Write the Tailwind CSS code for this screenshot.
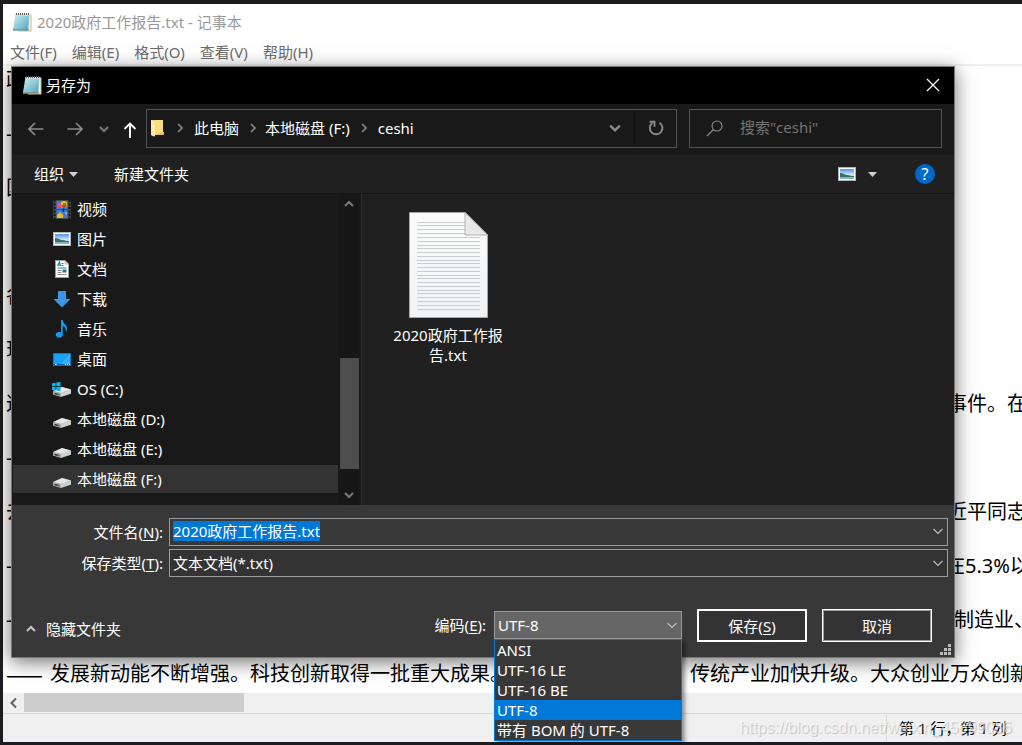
<!DOCTYPE html>
<html lang="zh-CN">
<head>
<meta charset="utf-8">
<meta name="viewport" content="width=device-width, initial-scale=1">
<title>2020政府工作报告.txt - 记事本</title>
<script src="https://cdn.jsdelivr.net/npm/@tailwindcss/browser@4"></script>
</head>
<body class="bg-[#1d1c1e] font-['Noto_Sans','Noto_Sans_CJK_SC',sans-serif] text-[15px] leading-5">

<svg class="absolute size-0" aria-hidden="true">
  <defs>
    <linearGradient id="padFill" x1="0" y1="0" x2="1" y2="1">
      <stop offset="0" stop-color="#d3eef3"/><stop offset=".5" stop-color="#8fcbd9"/><stop offset="1" stop-color="#4f9fb4"/>
    </linearGradient>
    <linearGradient id="sky" x1="0" y1="0" x2="0" y2="1">
      <stop offset="0" stop-color="#4f93e8"/><stop offset=".6" stop-color="#d8ecf8"/><stop offset="1" stop-color="#9cc8e4"/>
    </linearGradient>
    <linearGradient id="page" x1="0" y1="0" x2="0" y2="1">
      <stop offset="0" stop-color="#fbfbfb"/><stop offset="1" stop-color="#f1f3f5"/>
    </linearGradient>
    <symbol id="notepad" viewBox="0 0 20 20">
      <path d="M4 2.500h15.500v17H6z" fill="#c9b98a"/>
      <path d="M4 2.500h14.500v16H6z" fill="#eef1ee"/>
      <path d="M3.500 2h14l-1.300 16.500H.8z" fill="url(#padFill)"/>
      <path d="M3.500 2h14l-.2 2H3.200z" fill="#bcdfe6"/>
      <path d="M.8 18.500h15.400l1-1.200H1z" fill="#7b8d8a"/>
      <path d="M4.500 1v2M6.500 1v2M8.500 1v2M10.500 1v2M12.500 1v2M14.500 1v2M16.500 1v2" stroke="#565b5e" stroke-width="1"/>
    </symbol>
    <symbol id="picture" viewBox="0 0 18 14">
      <rect width="18" height="14" fill="#b4b4b4"/><rect x="1" y="1" width="16" height="12" fill="#fff"/>
      <rect x="2" y="2" width="14" height="10" fill="url(#sky)"/>
      <path d="M2 6c3 0 4 1.500 7 2s5 1 7 1v1H2z" fill="#3f6f61"/>
      <path d="M2 10h14v2H2z" fill="#7fb2cf"/>
    </symbol>
    <symbol id="drive" viewBox="0 0 18 12">
      <path d="M0 6.500L9 2l9 2.500v4.200L8 12 0 9.500z" fill="#8d8f91"/>
      <path d="M0 6L9 2l9 2.500L8 8z" fill="#e6e7e8"/>
      <path d="M0 6.200L8 8v3.700L0 9.500z" fill="#aeb0b1"/>
      <path d="M1.500 7.700l5 1.200v1.600l-5-1.200z" fill="#2d3330"/>
      <path d="M4.500 8.800l1.500.4v.8l-1.500-.4z" fill="#4fbf5b"/>
      <path d="M8 8l10-3.500v4L8 11.700z" fill="#cfd1d2"/>
    </symbol>
    <symbol id="chevDown" viewBox="0 0 10 10"><path d="M1 3l4 4 4-4" fill="none" stroke="currentColor" stroke-width="2"/></symbol>
    <symbol id="chevThin" viewBox="0 0 10 10"><path d="M.5 3L5 7.500 9.500 3" fill="none" stroke="currentColor" stroke-width="1.100"/></symbol>
    <symbol id="chevUp" viewBox="0 0 10 10"><path d="M1 7l4-4 4 4" fill="none" stroke="currentColor" stroke-width="2"/></symbol>
    <symbol id="chevRight" viewBox="0 0 8 10"><path d="M2 1l4 4-4 4" fill="none" stroke="currentColor" stroke-width="1.700"/></symbol>
    <symbol id="caret" viewBox="0 0 9 5"><path d="M0 0h9L4.500 5z" fill="currentColor"/></symbol>
  </defs>
</svg>

<div class="relative flex h-screen flex-col overflow-hidden pt-1 pb-[3px] pl-[3px]">

  <!-- Notepad window -->
  <main class="flex min-h-0 flex-1 flex-col bg-white">
    <header class="flex h-9 items-center gap-1 pl-[9px] text-[#999999]">
      <svg class="size-5"><use href="#notepad"/></svg>
      <h1 class="pl-px">2020政府工作报告.txt - 记事本</h1>
    </header>
    <nav class="flex h-[26px] items-center gap-[15px] border-b-2 border-[#f0f0f0] pl-[7px] text-[#6d6d6d]">
      <button>文件(F)</button><button>编辑(E)</button><button>格式(O)</button><button>查看(V)</button><button>帮助(H)</button>
    </nav>
    <article class="flex min-h-0 flex-1 flex-col gap-[27px] overflow-hidden pl-[3px] text-xl leading-[27px] whitespace-nowrap text-black">
      <p>政府工作报告</p>
      <p>——2020年5月22日</p>
      <p>国务院总理</p>
      <p>&nbsp;</p>
      <p>各位代表：</p>
      <p>现在，我代表国务院</p>
      <p class="flex"><span class="w-[941px] shrink-0">这次新冠肺炎疫情</span><span>事件。在</span></p>
      <p>——</p>
      <p class="flex"><span class="w-[941px] shrink-0">去年</span><span>近平同志</span></p>
      <p class="flex"><span class="w-[939px] shrink-0">——经济运行</span><span>在5.3%以下</span></p>
      <p class="flex"><span class="w-[948px] shrink-0">——经济结构</span><span>制造业、</span></p>
      <p class="flex"><span class="w-11 shrink-0 font-['Noto_Sans_CJK_SC',sans-serif] text-[22px]">——</span><span>发展新动能不断增强。科技创新取得一批重大成果。新兴产业蓬勃发展，传统产业加快升级。大众创业万众创新</span></p>
    </article>
    <div class="flex h-5 items-stretch bg-[#f0f0f0]">
      <button aria-label="向左滚动" class="flex w-[21px] items-center justify-center text-[#606060]">
        <svg class="h-3 w-2" viewBox="0 0 8 12"><path d="M6 1.500L1.500 6 6 10.500" fill="none" stroke="currentColor" stroke-width="2"/></svg>
      </button>
      <div class="mb-px w-[220px] bg-[#cdcdcd]"></div>
    </div>
    <footer class="relative flex h-[29px] items-center justify-end border-t border-[#d7d7d7] bg-[#f0f0f0] text-black">
      <div class="flex h-6.5 w-[136px] items-center border-l border-[#d7d7d7] pl-3 whitespace-nowrap">第 1 行，第 1 列</div>
      <div class="absolute top-1 right-2.5 font-['Liberation_Sans',sans-serif] text-base leading-5 text-white/60 [text-shadow:1px_1px_1px_rgb(0_0_0/0.2)]">https://blog.csdn.net/weixin_45699086</div>
    </footer>
  </main>

  <!-- Save-as dialog -->
  <section role="dialog" aria-labelledby="dlgTitle" class="absolute top-[66px] right-[67px] left-[11px] flex flex-col border border-[#777777] bg-[#383838] text-white shadow-[0_4px_18px_rgb(0_0_0/0.55)]">
    <header class="flex h-[37px] items-center bg-black pr-3.5 pb-0.5 pl-2.5">
      <svg class="size-5"><use href="#notepad"/></svg>
      <h2 id="dlgTitle" class="flex-1 pl-1">另存为</h2>
      <button aria-label="关闭"><svg class="size-3.5" viewBox="0 0 14 14"><path d="M1 1l12 12M13 1L1 13" stroke="#fff" stroke-width="1.300"/></svg></button>
    </header>

    <div class="flex h-[51px] items-center bg-[#191919] pr-3 pb-0.5 pl-4">
      <button aria-label="后退" class="text-[#8a8a8a]"><svg class="h-3.5 w-4" viewBox="0 0 16 14"><path d="M15.500 7H1M7 1L1 7l6 6" fill="none" stroke="currentColor" stroke-width="1.700"/></svg></button>
      <button aria-label="前进" class="ml-[23px] text-[#8a8a8a]"><svg class="h-3.5 w-4" viewBox="0 0 16 14"><path d="M.5 7H15M9 1l6 6-6 6" fill="none" stroke="currentColor" stroke-width="1.700"/></svg></button>
      <button aria-label="最近位置" class="ml-4 text-[#7a7a7a]"><svg class="size-2.5"><use href="#chevDown"/></svg></button>
      <button aria-label="上移" class="ml-3.5 pt-0.5 text-white"><svg class="h-4 w-3.5" viewBox="0 0 14 16"><path d="M7 16V1.500M1.500 7L7 1.500 12.500 7" fill="none" stroke="currentColor" stroke-width="1.900"/></svg></button>
      <div class="ml-[9px] flex h-[39px] flex-1 items-center border border-[#535353] pb-px pl-1">
        <svg class="h-[18px] w-[13px]" viewBox="0 0 13 18"><path d="M0 1h12v12l1 .5V16H4l-1 1.500L0 16z" fill="#f3cf6b"/><path d="M5 1h7v12l1 .5V16H3V2z" fill="#fbdc82"/><path d="M0 1l4 2v14.500L0 16z" fill="#ffe9a6"/><path d="M12 10v3.500l1 .5v2H4l8-3z" fill="#e9bb50"/></svg>
        <svg class="ml-3 h-2.5 w-2 text-[#8a8a8a]"><use href="#chevRight"/></svg>
        <a href="#" class="ml-2.5">此电脑</a>
        <svg class="ml-2.5 h-2.5 w-2 text-[#8a8a8a]"><use href="#chevRight"/></svg>
        <a href="#" class="ml-2">本地磁盘 (F:)</a>
        <svg class="ml-2.5 h-2.5 w-2 text-[#8a8a8a]"><use href="#chevRight"/></svg>
        <a href="#" class="ml-2.5 flex-1">ceshi</a>
        <button aria-label="历史记录" class="flex h-full w-10 items-center justify-center border-r border-[#121212] text-[#8a8a8a]"><svg class="size-3"><use href="#chevDown"/></svg></button>
        <button aria-label="刷新" class="flex h-full w-[41px] items-center justify-center"><svg class="size-4" viewBox="0 0 16 16"><path d="M11.500 2.700A6.300 6.300 0 1 1 4.300 3" fill="none" stroke="#8a8a8a" stroke-width="1.900"/><path d="M1.500 1.800h5v5" fill="none" stroke="#8a8a8a" stroke-width="1.900"/></svg></button>
      </div>
      <label class="ml-3 flex h-[39px] w-[253px] items-center gap-[17px] border border-[#535353] pb-px pl-4">
        <svg class="size-[17px] shrink-0" viewBox="0 0 17 17"><circle cx="11" cy="6" r="5" fill="none" stroke="#8a8a8a" stroke-width="1.100"/><path d="M7.500 9.500L1 16" stroke="#8a8a8a" stroke-width="1.200"/></svg>
        <input type="search" aria-label="搜索" placeholder='搜索"ceshi"' class="w-full min-w-0 bg-transparent pb-0.5 outline-none placeholder:text-[#747474]">
      </label>
    </div>

    <div class="flex h-[39px] items-center border-b border-[#151515] bg-[#202020] pr-[19px] pl-[22px]">
      <button class="flex items-center gap-[5px]">组织<svg class="h-[5px] w-[9px] text-[#d0d0d0]"><use href="#caret"/></svg></button>
      <button class="ml-9">新建文件夹</button>
      <button aria-label="更改视图" class="ml-auto flex items-center gap-3"><svg class="h-3.5 w-[18px]"><use href="#picture"/></svg><svg class="h-[5px] w-[9px] text-[#d0d0d0]"><use href="#caret"/></svg></button>
      <button aria-label="帮助" class="ml-[38px] flex size-5 items-center justify-center rounded-full bg-[#0068c9] text-base leading-5">?</button>
    </div>

    <div class="flex h-[311px]">
      <div class="flex w-[350px] border-r border-[#2b2b2b] bg-[#191919]">
        <ul class="flex-1 pl-px">
          <li class="flex h-[30px] items-center gap-1.5 pl-10">
            <svg class="h-[19px] w-[18px]" viewBox="0 0 18 19"><rect width="18" height="19" fill="#4a4a4a"/><path d="M1.500 0v19M16.500 0v19" stroke="#111" stroke-width="1.800" stroke-dasharray="2 1.500"/><rect x="3.500" y="1" width="11" height="8" fill="#3d7ce0"/><rect x="3.500" y="10" width="11" height="8" fill="#3d7ce0"/><ellipse cx="11" cy="4.500" rx="3.200" ry="3.500" fill="#e6c11c"/><path d="M8 5h6l-2 3h-2z" fill="#d23b2a"/><path d="M5 3h3v4H4z" fill="#e8506b"/><path d="M10 3h3v2h-3z" fill="#3b9a47"/><path d="M4 15l3-3 3 3v3H4zM11 11l3 2v2z" fill="#e6c11c"/><path d="M10.500 8.500v3.500" stroke="#222" stroke-width="1.500"/></svg>视频</li>
          <li class="flex h-[30px] items-center gap-1.5 pl-10"><svg class="h-3.5 w-[18px]"><use href="#picture"/></svg>图片</li>
          <li class="flex h-[30px] items-center gap-1.5 pl-10">
            <svg class="h-[18px] w-[18px]" viewBox="0 0 18 18"><path d="M2 0h10l4 4v14H2z" fill="#9c9c9c"/><path d="M3 1h8.500L15 4.500V17H3z" fill="#fff"/><path d="M11.500 0v4.500H16z" fill="#c9c9c9"/><path d="M4.500 6L6.500 2l1 4M5 5h2.500" fill="none" stroke="#1784cf" stroke-width="1.200"/><path d="M8.500 3.500h2M8.500 5.500h2M4.500 8h9" stroke="#1784cf"/><path d="M4.500 10.500h4M4.500 12.500h4M4.500 14.500h9" stroke="#8a8a8a"/><rect x="9.500" y="9.500" width="4" height="3" fill="#3b6f8c"/></svg>文档</li>
          <li class="flex h-[30px] items-center gap-1.5 pl-10">
            <svg class="h-[18px] w-[18px]" viewBox="0 0 18 18"><path d="M5 1h8v8h4.500L9 17.500.5 9H5z" fill="#3a96e6"/></svg>下载</li>
          <li class="flex h-[30px] items-center gap-1.5 pl-10">
            <svg class="h-[18px] w-[18px]" viewBox="0 0 18 18"><ellipse cx="6.200" cy="14.700" rx="3.400" ry="2.800" fill="#0c9bf5"/><path d="M8 0h1.700c.4 4 4.300 4.500 4.300 8.500 0 1.500-.6 2.600-1.300 3.500.4-3.500-.7-5-3-6v9H8z" fill="#0c9bf5"/></svg>音乐</li>
          <li class="flex h-[30px] items-center gap-1.5 pl-10">
            <svg class="h-[13px] w-[18px]" viewBox="0 0 18 13"><rect width="18" height="13" fill="#1277c9"/><path d="M1 1h16v10H1z" fill="#16a1fb"/><path d="M8 11l9-10v10z" fill="#3ab0fc"/><path d="M1 11h16v1H1z" fill="#0d5f9f"/><path d="M2 11.500h1.500M12 11.500h1M14 11.500h1M16 11.500h1" stroke="#fff"/></svg>桌面</li>
          <li class="flex h-[30px] items-center gap-1.5 pl-[39px]">
            <svg class="h-[15px] w-[19px]" viewBox="0 0 19 15"><svg x="1" y="3" width="18" height="12"><use href="#drive"/></svg><path d="M0 1.300l3.600-.6v3.600H0zM4.300.6L8.500 0v4.300H4.300zM0 5h3.600v3.500L0 8zM4.300 5h4.200v4.200l-4.200-.6z" fill="#00b7f1"/></svg>OS (C:)</li>
          <li class="flex h-[30px] items-center gap-1.5 pl-10"><svg class="mt-1.5 h-3 w-[18px]"><use href="#drive"/></svg>本地磁盘 (D:)</li>
          <li class="flex h-[30px] items-center gap-1.5 pl-10"><svg class="mt-1.5 h-3 w-[18px]"><use href="#drive"/></svg>本地磁盘 (E:)</li>
          <li class="flex h-[30px] items-center gap-1.5 border-y border-[#191919] bg-[#333333] pl-10"><svg class="mt-1.5 h-3 w-[18px]"><use href="#drive"/></svg>本地磁盘 (F:)</li>
        </ul>
        <div class="mr-0.5 ml-px flex w-5 flex-col items-center bg-[#171717] text-[#7a7a7a]">
          <button aria-label="向上滚动" class="flex h-5 items-center"><svg class="size-2.5"><use href="#chevUp"/></svg></button>
          <div class="mt-auto h-[111px] w-[19px] bg-[#4d4d4d]"></div>
          <button aria-label="向下滚动" class="mt-4 flex h-5 items-center"><svg class="size-2.5"><use href="#chevDown"/></svg></button>
        </div>
      </div>
      <div class="flex-1 bg-[#202020] pt-[18px] pl-7">
        <figure class="flex w-[116px] flex-col items-center">
          <svg class="h-[106px] w-[79px]" viewBox="0 0 79 106">
            <path d="M.5.5H56L78.500 23v82.500H.5z" fill="url(#page)" stroke="#a3a8a6"/>
            <g stroke="#cccdce" stroke-width="1">
              <path d="M8 10.500h48M8 13.500h48M8 17.500h48M8 21.500h48M8 25.500h63M8 29.500h63M8 33.500h63M8 36.500h63M8 40.500h63M8 44.500h63M8 48.500h63M8 51.500h63M8 55.500h63M8 59.500h63M8 63.500h63M8 66.500h63M8 70.500h63M8 74.500h63M8 78.500h63M8 81.500h63M8 85.500h63M8 89.500h63M8 93.500h63M8 97.500h63"/>
            </g>
            <path d="M56 .5V23h22.500z" fill="#e9e9ea" stroke="#b0b2b3"/>
          </svg>
          <figcaption class="mt-[7px] w-full text-center leading-5 break-all">2020政府工作报告.txt</figcaption>
        </figure>
      </div>
    </div>

    <form class="flex flex-col pt-[13px] pr-1.5 pb-[15px]" onsubmit="return false">
      <div class="grid grid-cols-[151px_1fr] items-center gap-x-1.5 gap-y-[3px]">
        <label for="fileName" class="text-right">文件名(<u class="underline-offset-2">N</u>):</label>
        <div class="flex h-7 items-center border border-[#9b9b9b] pr-1 pb-0.5 pl-[3px]">
          <input id="fileName" value="2020政府工作报告.txt" class="field-sizing-content h-5 bg-[#0078d7] text-white outline-none">
          <button type="button" aria-label="历史文件名" class="ml-auto text-[#c0c0c0]"><svg class="size-2.5"><use href="#chevThin"/></svg></button>
        </div>
        <label for="fileType" class="text-right">保存类型(<u class="underline-offset-2">T</u>):</label>
        <div class="relative h-7">
          <select id="fileType" class="h-full w-full appearance-none border border-[#9b9b9b] bg-[#333333] pl-[3px] text-white outline-none"><option>文本文档(*.txt)</option></select>
          <svg class="pointer-events-none absolute top-[9px] right-[5px] size-2.5 text-[#c0c0c0]"><use href="#chevThin"/></svg>
        </div>
      </div>
      <div class="mt-8 flex items-start pr-4">
        <button type="button" class="mt-2.5 mr-auto ml-3.5 flex items-center gap-2.5"><svg class="size-2.5 text-[#c8c8c8]"><use href="#chevUp"/></svg>隐藏文件夹</button>
        <label for="encoding" class="mt-1.5">编码(<u class="underline-offset-2">E</u>):</label>
        <div class="relative mt-0.5 ml-2 h-7 w-[188px]">
          <select id="encoding" class="h-full w-full appearance-none border border-[#9b9b9b] bg-[#666666] pl-[3px] text-white outline-none"><option>UTF-8</option></select>
          <svg class="pointer-events-none absolute top-[9px] right-[5px] size-2.5 text-[#c0c0c0]"><use href="#chevThin"/></svg>
          <ul role="listbox" aria-label="编码" class="absolute top-full left-0 z-10 w-full border border-[#0078d7] bg-[#383838] leading-5 shadow-[3px_3px_4px_rgb(0_0_0/0.4)] *:pl-0.5">
            <li role="option">ANSI</li>
            <li role="option">UTF-16 LE</li>
            <li role="option">UTF-16 BE</li>
            <li role="option" aria-selected="true" class="bg-[#0078d7]">UTF-8</li>
            <li role="option">带有 BOM 的 UTF-8</li>
          </ul>
        </div>
        <button type="submit" class="ml-[15px] h-[33px] w-[110px] border-2 border-white bg-[#333333]">保存(<u class="underline-offset-2">S</u>)</button>
        <button type="button" class="ml-[15px] h-[33px] w-[110px] border border-white bg-[#333333] inset-ring inset-ring-[#9b9b9b]">取消</button>
      </div>
    </form>
    <svg class="absolute right-[3px] bottom-0.5 size-[11px]" viewBox="0 0 11 11" fill="#bcbcbc" aria-hidden="true"><path d="M8 0h3v3H8zM4 4h3v3H4zM8 4h3v3H8zM0 8h3v3H0zM4 8h3v3H4zM8 8h3v3H8z"/></svg>
  </section>
</div>
</body>
</html>
